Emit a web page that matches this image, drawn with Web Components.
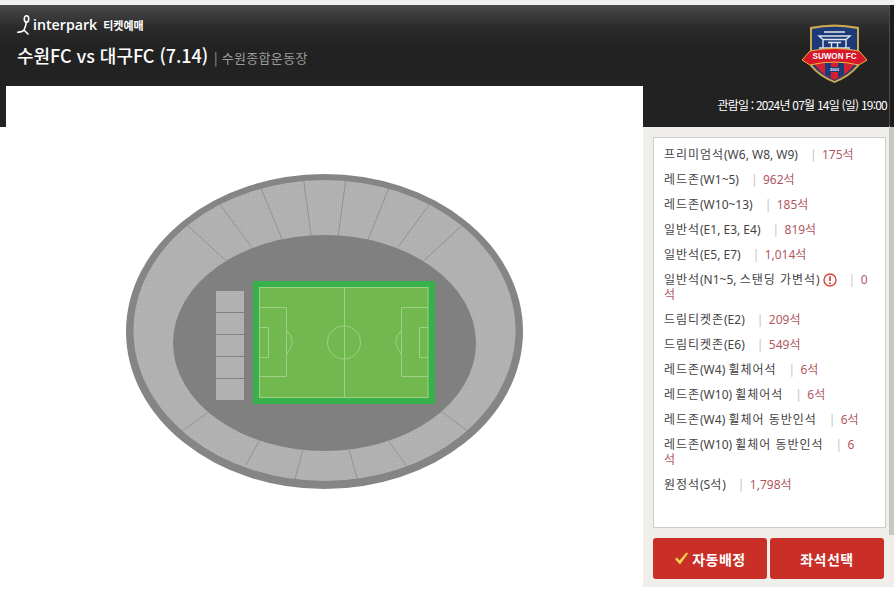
<!DOCTYPE html>
<html lang="ko"><head><meta charset="utf-8"><title>좌석선택</title>
<style>
html,body{margin:0;padding:0;background:#fff;overflow:hidden}
body{width:894px;height:597px;font-family:"Noto Sans CJK KR","Noto Sans",sans-serif}
</style></head><body>
<seat-app></seat-app>
<script>
const KR='"Noto Sans CJK KR","Noto Sans",sans-serif';
class SeatApp extends HTMLElement{constructor(){super();this.attachShadow({mode:'open'}).innerHTML=`<style>
:host{display:block;position:relative;width:894px;height:597px;background:#fff;overflow:hidden}
.strip{height:5px;background:#eef0f2}
.main{display:grid;grid-template-columns:643px 251px}
.rail{position:absolute;right:0;top:5px;width:5px;height:530px;background:linear-gradient(#1c1c1c 122px,#c9c7c4 122px);border-left:1px solid #4c4c4c;box-sizing:border-box;border-image:linear-gradient(#4c4c4c 122px,#c9c7c4 122px) 1;border-radius:2px 0 0 0}
</style>
<div class="strip"></div>
<app-header></app-header>
<div class="main"><stage-area></stage-area><seat-panel></seat-panel></div>
<div class="rail"></div>`}}
class AppHeader extends HTMLElement{constructor(){super();this.attachShadow({mode:'open'}).innerHTML=`<style>
:host{display:flex;justify-content:space-between;height:81px;box-sizing:border-box;padding:8px 6px 0 17px;color:#fff;background:linear-gradient(#4a4a4a 0,#2b2b2b 22px,#222 40px,#222 100%);font-family:${KR}}
.brand{display:flex;align-items:center;gap:1px;height:24px}
.word{font:600 14.200px/24px "Open Sans",sans-serif}
.tk{font:700 11px/24px ${KR};margin-left:5px}
.title{display:flex;align-items:baseline;margin-top:5px;font-size:18px;line-height:27px;font-weight:500;white-space:nowrap;letter-spacing:-.05px}
.place{font-size:13px;font-weight:400;color:#9c9c9c;margin-left:6px;letter-spacing:.3px}
.crest{margin:11px 21px 0 0;width:65px;height:59px;flex:none}
</style>
<div><div class="brand"><svg width="15" height="22" viewBox="0 0 15 22" fill="none" stroke="#fff" stroke-width="1.600" stroke-linecap="round"><ellipse cx="9.500" cy="5" rx="2.200" ry="3.200"/><path d="M9.300 8.200C9 11 8 14 7 16L11 20M7 16C5.500 18 3 18 0.800 18.200"/></svg><span class="word">interpark</span><span class="tk">티켓예매</span></div>
<div class="title"><span>수원FC vs 대구FC (7.14)</span><span class="place">| 수원종합운동장</span></div></div>
<svg class="crest" viewBox="0 0 65 59">
<path d="M8 3Q32.500 -2 57 3V28L57 42Q48 53 32.500 59 17 53 8 42Z" fill="#c9a74e"/>
<path d="M10 5Q32.500 0.500 55 5V41Q47 51 32.500 57 18 51 10 41Z" fill="#1d3a78"/>
<path d="M22 8H43M17 12H48L44 15.500H21ZM21 16V24M44 16V24M17 24H48M26 18.500H39M29.500 19V24M35.500 19V24" stroke="#dfe5ef" stroke-width="1.400" fill="none"/>
<path d="M13 36H52V41Q46 50 32.500 56 19 50 13 41Z" fill="#d4202f"/>
<path d="M23 36V50L29 54V36ZM36 36V54L42 50V36Z" fill="#1d3a78"/>
<rect x="26" y="43" width="13" height="5" fill="#1d3a78"/>
<path d="M8 27Q32.500 22 57 27L65 36 57 41Q32.500 35 8 41L0 36Z" fill="#d7182a" stroke="#e9b73f" stroke-width="1"/>
<text x="32.500" y="35" text-anchor="middle" font-family="Liberation Sans,sans-serif" font-weight="700" font-size="9" textLength="44" lengthAdjust="spacingAndGlyphs" fill="#fff">SUWON FC</text>
<text x="32.500" y="47" text-anchor="middle" font-family="Liberation Sans,sans-serif" font-weight="700" font-size="4" fill="#fff">2003</text>
</svg>`}}
class StageArea extends HTMLElement{constructor(){super();this.attachShadow({mode:'open'}).innerHTML=`<style>
:host{display:block;height:511px;background:#fff}
.tab{width:6px;height:41px;background:#222}
stadium-map{margin:47px 0 0 124px}
</style><div class="tab"></div><stadium-map></stadium-map>`}}
class StadiumMap extends HTMLElement{constructor(){super();
const lines=[[187.7,225.7,226,260.7],[220,204.3,251.7,247.3],[261,188.3,282,239],[303.7,180.7,311,235],[345.7,180.7,338.3,235],[388.7,188.3,368.3,239],[429.3,204.5,398,247],[461.7,225.7,424.3,260.3],[207.7,412.7,182.7,430.7],[259.3,440.7,246,465],[302.7,450.7,295,479],[349.3,450.7,357.3,479],[389,441.7,406.7,466],[442.3,412.3,467.3,430.7]];
this.attachShadow({mode:'open'}).innerHTML=`<style>:host{display:block;width:402px;height:318px}svg{display:block}</style>
<svg width="402" height="318" viewBox="124 174 402 318">
<defs><pattern id="d" width="2" height="2" patternUnits="userSpaceOnUse"><rect width="2" height="2" fill="#b8b8b8"/><path d="M0 .5H2M.5 0V2" stroke="#afafaf" stroke-width="1"/></pattern></defs>
<ellipse cx="324.5" cy="331.5" rx="198.5" ry="157.5" fill="#858585"/>
<ellipse cx="324.5" cy="330.5" rx="191" ry="150.5" fill="url(#d)"/>
<g stroke="#7d7d7d" stroke-width=".6">${lines.map(l=>`<line x1="${l[0]}" y1="${l[1]}" x2="${l[2]}" y2="${l[3]}"/>`).join('')}</g>
<ellipse cx="324.5" cy="343" rx="151.5" ry="108" fill="#808080"/>
<rect x="216" y="291" width="28" height="109" fill="url(#d)"/>
<path d="M216 312.5H244M216 334.5H244M216 356.5H244M216 378.5H244" stroke="#808080"/>
<rect x="253" y="281" width="182" height="123" fill="#37b14a"/>
<rect x="259" y="287" width="169" height="110.500" fill="#71b94f"/>
<g fill="none" stroke="#a0cf86" stroke-width="1">
<rect x="259.500" y="287.500" width="168.500" height="110"/>
<path d="M344.500 287.500V397.500"/><circle cx="344" cy="342.500" r="16.500"/>
<path d="M259.500 307.500H286.500V376.500H259.500M259.500 327.500H268.500V357.500H259.500M286.500 330Q298 342 286.500 354"/>
<path d="M428 307.500H401.500V376.500H428M428 327.500H419.500V357.500H428M401.500 330Q390 342 401.500 354"/>
</g></svg>`}}
class SeatPanel extends HTMLElement{constructor(){super();
const rows=[['프리미엄석(W6, W8, W9)','175석'],['레드존(W1~5)','962석'],['레드존(W10~13)','185석'],['일반석(E1, E3, E4)','819석'],['일반석(E5, E7)','1,014석'],['일반석(N1~5, 스탠딩 가변석)','0|석',1],['드림티켓존(E2)','209석'],['드림티켓존(E6)','549석'],['레드존(W4) 휠체어석','6석'],['레드존(W10) 휠체어석','6석'],['레드존(W4) 휠체어 동반인석','6석'],['레드존(W10) 휠체어 동반인석','6|석'],['원정석(S석)','1,798석']];
this.attachShadow({mode:'open'}).innerHTML=`<style>
:host{display:block;height:501px;font-family:${KR}}
.date{height:41px;background:#222;color:#fff;font-size:12px;line-height:38px;text-align:right;padding-right:7px;letter-spacing:-.78px;white-space:nowrap}
.body{height:460px;box-sizing:border-box;background:#f0eeeb;padding:10px 8px 0 10px}
.list{height:391px;width:233px;box-sizing:border-box;background:#fff;border:1px solid #ccc;padding:9px 4px 0 10px}
.btns{display:flex;gap:3px;margin:10px 0 0 0}
</style>
<div class="date">관람일 : 2024년 07월 14일 (일) 19:00</div>
<div class="body"><div class="list">${rows.map(r=>`<seat-row label="${r[0]}" count="${r[1]}" ${r[2]?'warn':''}></seat-row>`).join('')}</div>
<div class="btns"><action-button check>자동배정</action-button><action-button>좌석선택</action-button></div></div>`}}
const runs=s=>s.split(/([\uAC00-\uD7A3]+(?: [\uAC00-\uD7A3]+)*)/).filter(Boolean).map(t=>/[\uAC00-\uD7A3]/.test(t)?`<span class="h">${t}</span>`:t).join('');
class SeatRow extends HTMLElement{constructor(){super();this.attachShadow({mode:'open'})}
connectedCallback(){const w=this.hasAttribute('warn');const [a,b]=this.getAttribute('count').split('|');this.shadowRoot.innerHTML=`<style>
:host{display:block;font:12px/15px "Noto Sans","Noto Sans CJK KR",sans-serif;margin-bottom:10px;color:#444}
.h{font-family:"Noto Sans CJK KR",sans-serif;letter-spacing:.96px;line-height:8px}
.sep{color:#c4c4c4;margin:0 5.400px 0 12px}.c{color:#b2575f}
svg{vertical-align:-1px;margin-left:3px;height:14px;margin-block:-2px}
</style><span>${runs(this.getAttribute('label'))}</span>${w?'<svg width="14" height="14" viewBox="0 0 14 14"><circle cx="7" cy="7" r="6" fill="none" stroke="#d9453a" stroke-width="1.400"/><path d="M7 3.300V8" stroke="#d9453a" stroke-width="1.800"/><circle cx="7" cy="10.300" r="1" fill="#d9453a"/></svg>':''}<span class="sep">|</span><span class="c">${runs(a)}</span>${b?`<br><span class="c">${runs(b)}</span>`:''}`}}
class ActionButton extends HTMLElement{constructor(){super();this.attachShadow({mode:'open'})}
connectedCallback(){const c=this.hasAttribute('check');this.shadowRoot.innerHTML=`<style>
:host{display:flex;align-items:center;justify-content:center;gap:3px;width:114px;height:41px;background:#c92e27;color:#fff;border-radius:3px;font-size:14px;font-weight:700;letter-spacing:.5px}
</style>${c?'<svg width="15" height="13" viewBox="0 0 15 13"><path d="M1 7 3 5.500 5.500 8.500 12.500 .5 14 1.500 6 12.500Z" fill="#f7d54a"/></svg>':''}<slot></slot>`}}
[['seat-app',SeatApp],['app-header',AppHeader],['stage-area',StageArea],['stadium-map',StadiumMap],['seat-panel',SeatPanel],['seat-row',SeatRow],['action-button',ActionButton]].forEach(([n,k])=>customElements.define(n,k));
</script></body></html>
